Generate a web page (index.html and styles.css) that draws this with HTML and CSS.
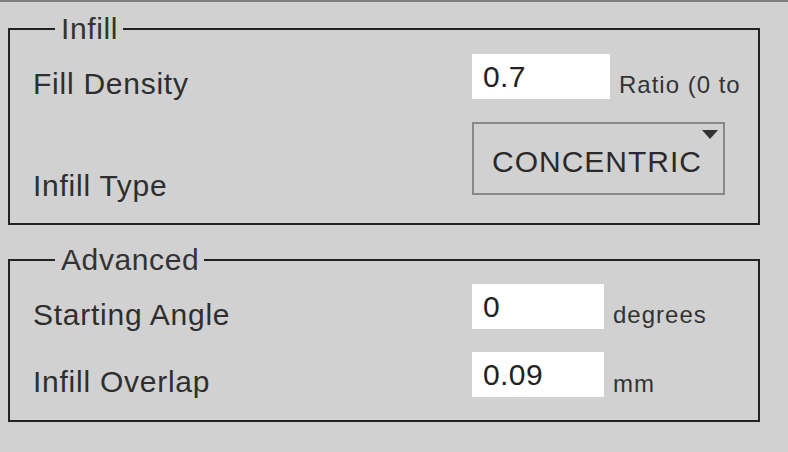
FILE: index.html
```html
<!DOCTYPE html>
<html>
<head>
<meta charset="utf-8">
<link rel="stylesheet" href="styles.css">
</head>
<body>
<div class="panel">
  <fieldset class="group">
    <legend class="legend">Infill</legend>
    <div class="rows rows-infill">
      <div class="label lbl-density">Fill Density</div>
      <div class="field field-density">0.7</div>
      <div class="unit unit-density">Ratio (0 to</div>
      <div class="label lbl-type">Infill Type</div>
      <div class="select">
        <span class="select-text">CONCENTRIC</span>
        <span class="arrow"></span>
      </div>
    </div>
  </fieldset>
  <fieldset class="group">
    <legend class="legend">Advanced</legend>
    <div class="rows rows-adv">
      <div class="label lbl-angle">Starting Angle</div>
      <div class="field">0</div>
      <div class="unit unit-angle">degrees</div>
      <div class="label lbl-overlap">Infill Overlap</div>
      <div class="field">0.09</div>
      <div class="unit unit-overlap">mm</div>
    </div>
  </fieldset>
</div>
</body>
</html>
```
FILE: styles.css
```css
html, body {
  margin: 0;
  padding: 0;
  background: #d1d1d1;
}
body {
  width: 788px;
  height: 452px;
  overflow: hidden;
  font-family: "Liberation Sans", Arial, sans-serif;
  color: #2a2a2a;
}
.panel {
  border-top: 2px solid #808080;
  padding: 13px 28px 0 8px;
  display: flex;
  flex-direction: column;
  gap: 21px;
}
.group {
  margin: 0;
  padding: 0;
  border: 2px solid #222;
  min-width: 0;
}
.legend {
  margin-left: 45px;
  padding: 0 5px 0 6px;
  font-size: 30px;
  line-height: 28px;
  letter-spacing: 0.6px;
  color: #333;
}
.rows {
  display: grid;
  grid-template-columns: 462px 138px 1fr;
}
.label {
  font-size: 30px;
  line-height: 30px;
  letter-spacing: 0.75px;
  padding-left: 23px;
  color: #2e2e2e;
  align-self: end;
  white-space: nowrap;
}
.field {
  align-self: end;
  background: #fff;
  height: 45px;
  font-size: 30px;
  line-height: 45px;
  letter-spacing: 0.4px;
  padding-left: 11px;
  box-sizing: border-box;
  color: #222;
}
.unit {
  align-self: end;
  font-size: 24px;
  line-height: normal;
  letter-spacing: 1px;
  padding-left: 9px;
  color: #333;
  white-space: nowrap;
}
.rows-infill {
  grid-template-rows: 56px 124px;
}
.unit-density {
  margin-bottom: 0;
}
.lbl-type {
  margin-bottom: 22px;
}
.select {
  grid-column: 2 / 4;
  align-self: start;
  width: 253px;
  height: 73px;
  box-sizing: border-box;
  border: 2px solid #888;
  margin-top: 23px;
  position: relative;
  display: flex;
  align-items: center;
  padding: 7px 0 0 18px;
  font-size: 30px;
  letter-spacing: 1px;
  color: #2a2a2a;
}
.arrow {
  position: absolute;
  top: 6px;
  right: 5px;
  width: 0;
  height: 0;
  border-left: 8px solid transparent;
  border-right: 8px solid transparent;
  border-top: 9px solid #333;
}
.rows-adv {
  grid-template-columns: 462px 132px 1fr;
  grid-template-rows: 55px 68px;
  padding-bottom: 23px;
}
.lbl-angle {
  margin-bottom: -1px;
}
.unit-angle {
  margin-bottom: 0;
}
.unit-overlap {
  margin-bottom: -1px;
}
```
